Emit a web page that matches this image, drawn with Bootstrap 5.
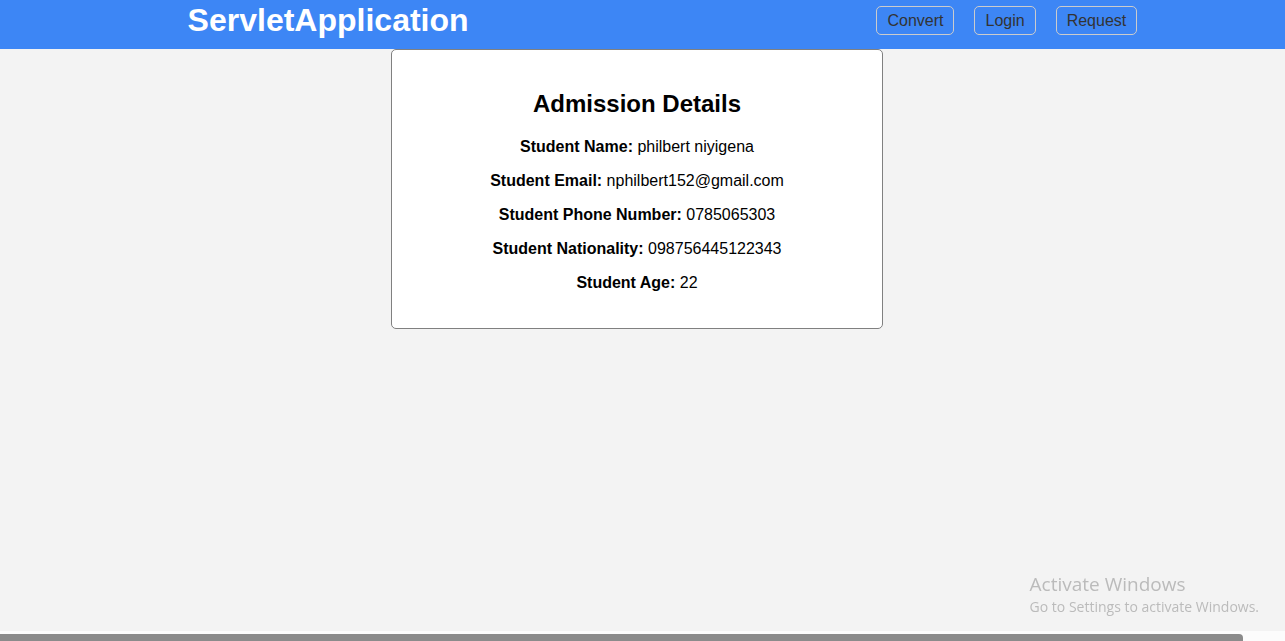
<!DOCTYPE html>
<html lang="en">
<head>
<meta charset="utf-8">
<meta name="viewport" content="width=device-width, initial-scale=1">
<title>ServletApplication</title>
<link rel="stylesheet" href="https://cdn.jsdelivr.net/npm/bootstrap@5.3.0/dist/css/bootstrap.min.css">
<style>
  body { font-family: "Liberation Sans", Arial, sans-serif; font-size: 16px; line-height: 18px; color: #000; background: #f3f3f3; }
  .site-header { background: #3d86f5; padding: 6px 11.5% 14px 14.6%; }
  .site-title { font-size: 32px; line-height: 29px; }
  .site-links { gap: 20px; }
  .site-link { color: #333; border: 1px solid #ccc; border-radius: 5px; padding: 5px 10px; line-height: 17px; text-decoration: none; }
  .site-main { padding-right: 11px; }
  .details { width: 100%; max-width: 492px; border: 1px solid gray; border-radius: 5px; padding: 40px 20px 36px; }
  .details h1 { font-size: 24px; line-height: 28px; margin-bottom: 20px; }
  .details-rows { gap: 16px; }
  .notice { right: 26px; bottom: 24px; color: #bbb; font-family: "Open Sans", sans-serif; font-size: 14px; line-height: 20px; }
  .notice-title { font-size: 19px; line-height: 26px; }
  .scroll-track { background: #fcfcfc; padding-top: 3px; }
  .scroll-thumb { width: 96.7%; height: 7px; background: #8b8b8b; border-radius: 0 4px 0 0; }
</style>
<script src="https://cdn.jsdelivr.net/npm/bootstrap@5.3.0/dist/js/bootstrap.bundle.min.js" defer></script>
</head>
<body class="d-flex flex-column min-vh-100">
<header class="site-header d-flex flex-wrap justify-content-between align-items-center">
  <div class="site-title fw-bold text-white">ServletApplication</div>
  <nav class="site-links d-flex">
    <a class="site-link" href="#">Convert</a>
    <a class="site-link" href="#">Login</a>
    <a class="site-link" href="#">Request</a>
  </nav>
</header>
<main class="site-main d-flex justify-content-center">
  <section class="details bg-white text-center">
    <h1 class="fw-bold">Admission Details</h1>
    <div class="details-rows d-flex flex-column">
      <p class="mb-0"><strong>Student Name:</strong> philbert niyigena</p>
      <p class="mb-0"><strong>Student Email:</strong> nphilbert152@gmail.com</p>
      <p class="mb-0"><strong>Student Phone Number:</strong> 0785065303</p>
      <p class="mb-0"><strong>Student Nationality:</strong> 098756445122343</p>
      <p class="mb-0"><strong>Student Age:</strong> 22</p>
    </div>
  </section>
</main>
<aside class="notice position-fixed">
  <div class="notice-title">Activate Windows</div>
  <div>Go to Settings to activate Windows.</div>
</aside>
<div class="scroll-track mt-auto" aria-hidden="true"><div class="scroll-thumb"></div></div>
</body>
</html>
